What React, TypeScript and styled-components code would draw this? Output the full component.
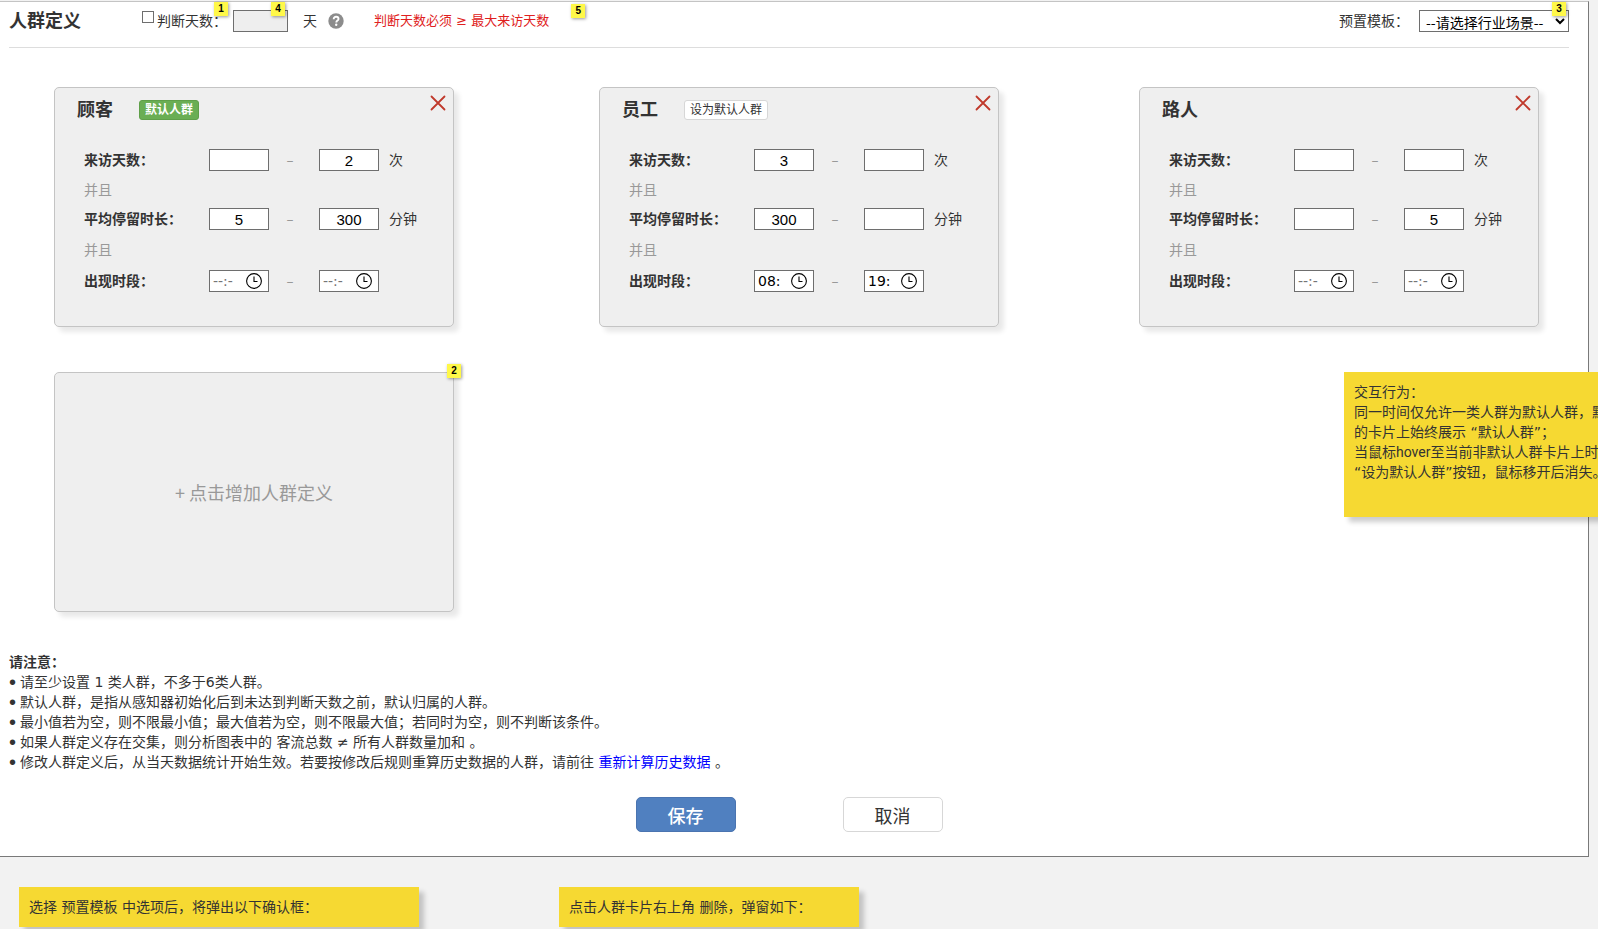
import React from "react";
import styled, { createGlobalStyle, css } from "styled-components";

const GlobalStyle = createGlobalStyle`
  *, *::before, *::after { box-sizing: border-box; }
  body {
    margin: 0;
    background: #f2f2f2;
    color: #333;
    font: 14px/20px "DejaVu Sans", "Noto Sans CJK SC", sans-serif;
  }
  button, input, select { font-family: inherit; color: inherit; margin: 0; }
`;

const Page = styled.div`
  position: relative;
  overflow: hidden;
  min-height: 100vh;
  padding-top: 1px;
`;

const Panel = styled.main`
  position: relative;
  margin-right: 9px;
  padding: 0 19px 24px 9px;
  background: #fff;
  border: solid #797979;
  border-width: 1px 1px 1px 0;
  border-top-color: #c4c4c4;
`;

const Header = styled.header`
  display: flex;
  align-items: center;
  height: 46px;
  padding-bottom: 8px;
  border-bottom: 1px solid #ddd;
`;

const PageTitle = styled.h1`
  margin: 0 61px 0 0;
  font-size: 18px;
  line-height: 20px;
`;

const CheckLabel = styled.label`
  display: flex;
  align-items: flex-start;
  gap: 3px;
  margin-right: 6px;
`;

const Checkbox = styled.input`
  appearance: none;
  width: 12px;
  height: 12px;
  border: 1px solid #6e6e6e;
  background: #fff;
  &:checked { background: #5080c0; }
`;

const Anchor = styled.div`
  position: relative;
  display: flex;
`;

const Marker = styled.span<{ $top: number; $right: number }>`
  position: absolute;
  top: ${(p) => p.$top}px;
  right: ${(p) => p.$right}px;
  width: 14px;
  height: 14px;
  background: #fff849;
  color: #000;
  font: bold 10px/14px "Liberation Sans", sans-serif;
  text-align: center;
  box-shadow: 1px 1px 3px rgba(0, 0, 0, 0.4);
`;

const fieldStyle = css`
  height: 22px;
  border: 1px solid #6e6e6e;
  border-radius: 0;
  background: #fff;
  color: #000;
`;

const DaysInput = styled.input`
  ${fieldStyle}
  width: 55px;
  background: #eee;
`;

const Unit = styled.span`
  margin: 0 11px 0 15px;
`;

const HelpButton = styled.button`
  display: flex;
  padding: 0;
  border: 0;
  background: none;
`;

const ErrorText = styled.span`
  margin: 0 36px 0 30px;
  color: #e02020;
  font-size: 13px;
`;

const TemplateLabel = styled.label`
  margin: 0 10px 0 auto;
`;

const TemplateSelect = styled.select`
  ${fieldStyle}
  width: 150px;
  padding: 0 0 0 2px;
  font: 14px "Noto Sans CJK SC", sans-serif;
`;

const CardGrid = styled.section`
  display: grid;
  grid-template-columns: minmax(400px, 545fr) minmax(400px, 540fr) 400px;
  row-gap: 45px;
  padding: 39px 30px 40px 45px;
`;

const cardStyle = css`
  position: relative;
  width: 400px;
  height: 240px;
  border: 1px solid #c4c4c4;
  border-radius: 5px;
  background: #efefef;
  box-shadow: 5px 5px 5px rgba(0, 0, 0, 0.09);
`;

const CardBox = styled.article`
  ${cardStyle}
  padding: 12px 8px 0 22px;
`;

const CardHead = styled.div`
  display: flex;
  align-items: center;
  height: 20px;
`;

const CardTitle = styled.h2`
  margin: 0 26px 0 0;
  font-size: 18px;
  line-height: 20px;
`;

const DefaultButton = styled.button<{ $active: boolean }>`
  height: 20px;
  padding: 0 5px;
  border: 1px solid ${(p) => (p.$active ? "#5f9f49" : "#d7d7d7")};
  border-radius: 3px;
  background: ${(p) => (p.$active ? "#6aae54" : "#fff")};
  color: ${(p) => (p.$active ? "#fff" : "#333")};
  font-size: 12px;
  line-height: 18px;
  font-weight: ${(p) => (p.$active ? 700 : 400)};
`;

const CloseButton = styled.button`
  position: absolute;
  top: 7px;
  right: 7px;
  display: flex;
  padding: 0;
  border: 0;
  background: none;
`;

const Rules = styled.div`
  display: grid;
  grid-template-rows: 22px 37px 22px 40px 22px;
  align-items: center;
  margin-top: 29px;
  padding-left: 7px;
`;

const RuleRow = styled.div`
  display: grid;
  grid-template-columns: 125px 60px 50px 60px 1fr;
  align-items: center;
`;

const RuleLabel = styled.label`
  font-weight: 700;
`;

const And = styled.span`
  color: #999;
`;

const Dash = styled.span`
  padding-right: 8px;
  color: #999;
  text-align: center;
`;

const NumberInput = styled.input`
  ${fieldStyle}
  width: 60px;
  padding: 0;
  font: 15px/20px "Liberation Sans", sans-serif;
  text-align: center;
`;

const TimeBox = styled.div`
  ${fieldStyle}
  display: flex;
  align-items: center;
  justify-content: space-between;
  width: 60px;
  padding: 0 6px 0 3px;
`;

const TimeInput = styled.input`
  width: 26px;
  height: 20px;
  padding: 0;
  border: 0;
  background: none;
  color: #000;
  font-size: 14px;
  &::placeholder { color: #757575; opacity: 1; }
`;

const RuleUnit = styled.span`
  padding-left: 10px;
`;

const AddBox = styled.div`
  position: relative;
  width: 400px;
`;

const AddCard = styled.button`
  ${cardStyle}
  color: #999;
  font: 18px "Noto Sans CJK SC", sans-serif;
`;

const NoticeTitle = styled.h3`
  margin: 0;
  font-size: 14px;
  line-height: 20px;
`;

const NoticeList = styled.ul`
  margin: 0;
  padding: 0;
  list-style: none;
`;

const Bullet = styled.span`
  display: inline-block;
  width: 11px;
  height: 20px;
  font: 20px/20px "Liberation Sans", sans-serif;
  vertical-align: top;
`;

const Link = styled.a`
  color: #0000ff;
  text-decoration: none;
`;

const Actions = styled.div`
  display: flex;
  justify-content: center;
  gap: 107px;
  margin-top: 25px;
`;

const ActionButton = styled.button<{ $primary?: boolean }>`
  width: 100px;
  height: 35px;
  padding: 0;
  border: 1px solid ${(p) => (p.$primary ? "#4a74b0" : "#d7d7d7")};
  border-radius: 5px;
  background: ${(p) => (p.$primary ? "#5080c0" : "#fff")};
  color: ${(p) => (p.$primary ? "#fff" : "#333")};
  font-size: 18px;
  font-weight: ${(p) => (p.$primary ? 500 : 400)};
`;

const stickyStyle = css`
  padding: 10px;
  background: #f6d932;
  box-shadow: 5px 5px 5px rgba(0, 0, 0, 0.2);
  white-space: nowrap;
`;

const SideNote = styled.aside`
  ${stickyStyle}
  position: absolute;
  top: 370px;
  right: -56px;
  width: 300px;
  height: 145px;
`;

const Latin = styled.span`
  font-family: Roboto, sans-serif;
`;

const NoteRow = styled.div`
  display: flex;
  gap: 140px;
  padding: 30px 19px 2px;
`;

const Note = styled.aside<{ $width: number }>`
  ${stickyStyle}
  width: ${(p) => p.$width}px;
`;

const CloseIcon = () => (
  <svg width="16" height="16" viewBox="0 0 16 16" aria-hidden="true">
    <path d="M1.5 1.5 14.5 14.5M14.5 1.5 1.5 14.5" stroke="#c0392b" strokeWidth="1.8" strokeLinecap="round" />
  </svg>
);

const HelpIcon = () => (
  <svg width="16" height="16" viewBox="0 0 16 16" aria-hidden="true">
    <circle cx="8" cy="8" r="7.7" fill="#8c8c8c" />
    <path d="M5.7 6.2C5.7 4.6 6.7 3.8 8.1 3.8s2.4.8 2.4 2.1c0 1.6-2.2 1.7-2.2 3.5" fill="none" stroke="#fff" strokeWidth="1.9" />
    <circle cx="8.2" cy="11.8" r="1.2" fill="#fff" />
  </svg>
);

const ClockIcon = () => (
  <svg width="16" height="16" viewBox="0 0 16 16" aria-hidden="true">
    <circle cx="8" cy="8" r="7.4" fill="none" stroke="#000" strokeWidth="1.1" />
    <path d="M8 3.5V8.5H11.5" fill="none" stroke="#000" strokeWidth="1.1" />
  </svg>
);

type Range = [string, string];

interface Crowd {
  id: string;
  name: string;
  mode?: "default" | "option";
  visits: Range;
  stay: Range;
  period: Range;
}

const crowds: Crowd[] = [
  { id: "customer", name: "顾客", mode: "default", visits: ["", "2"], stay: ["5", "300"], period: ["", ""] },
  { id: "staff", name: "员工", mode: "option", visits: ["3", ""], stay: ["300", ""], period: ["08:", "19:"] },
  { id: "passer", name: "路人", visits: ["", ""], stay: ["", "5"], period: ["", ""] },
];

interface RuleProps {
  id: string;
  label: string;
  unit?: string;
  values: Range;
  time?: boolean;
}

function Rule({ id, label, unit, values, time }: RuleProps) {
  const field = (i: 0 | 1) =>
    time ? (
      <TimeBox>
        <TimeInput type="text" id={`${id}-${i}`} aria-label={label} placeholder="--:-" defaultValue={values[i]} />
        <ClockIcon />
      </TimeBox>
    ) : (
      <NumberInput type="text" id={`${id}-${i}`} aria-label={label} defaultValue={values[i]} />
    );
  return (
    <RuleRow>
      <RuleLabel htmlFor={`${id}-0`}>{label}</RuleLabel>
      {field(0)}
      <Dash>–</Dash>
      {field(1)}
      {unit && <RuleUnit>{unit}</RuleUnit>}
    </RuleRow>
  );
}

function CrowdCard({ crowd }: { crowd: Crowd }) {
  return (
    <CardBox>
      <CardHead>
        <CardTitle>{crowd.name}</CardTitle>
        {crowd.mode && (
          <DefaultButton type="button" $active={crowd.mode === "default"}>
            {crowd.mode === "default" ? "默认人群" : "设为默认人群"}
          </DefaultButton>
        )}
      </CardHead>
      <CloseButton type="button" aria-label="删除">
        <CloseIcon />
      </CloseButton>
      <Rules>
        <Rule id={`${crowd.id}-visits`} label="来访天数：" unit="次" values={crowd.visits} />
        <And>并且</And>
        <Rule id={`${crowd.id}-stay`} label="平均停留时长：" unit="分钟" values={crowd.stay} />
        <And>并且</And>
        <Rule id={`${crowd.id}-period`} label="出现时段：" values={crowd.period} time />
      </Rules>
    </CardBox>
  );
}

export default function App() {
  return (
    <Page lang="zh-CN">
      <GlobalStyle />
      <Panel>
        <Header>
          <PageTitle>人群定义</PageTitle>
          <Anchor>
            <CheckLabel>
              <Checkbox type="checkbox" />
              判断天数：
            </CheckLabel>
            <Marker $top={-9} $right={5}>1</Marker>
          </Anchor>
          <Anchor>
            <DaysInput type="text" aria-label="判断天数" />
            <Marker $top={-8} $right={3}>4</Marker>
          </Anchor>
          <Unit>天</Unit>
          <HelpButton type="button" aria-label="帮助">
            <HelpIcon />
          </HelpButton>
          <Anchor>
            <ErrorText>判断天数必须 ≥ 最大来访天数</ErrorText>
            <Marker $top={-7} $right={0}>5</Marker>
          </Anchor>
          <TemplateLabel htmlFor="template">预置模板：</TemplateLabel>
          <Anchor>
            <TemplateSelect id="template">
              <option>--请选择行业场景--</option>
            </TemplateSelect>
            <Marker $top={-8} $right={3}>3</Marker>
          </Anchor>
        </Header>

        <CardGrid>
          {crowds.map((crowd) => (
            <CrowdCard key={crowd.id} crowd={crowd} />
          ))}
          <AddBox>
            <AddCard type="button">+ 点击增加人群定义</AddCard>
            <Marker $top={-8} $right={-7}>2</Marker>
          </AddBox>
        </CardGrid>

        <section>
          <NoticeTitle>请注意：</NoticeTitle>
          <NoticeList>
            <li><Bullet>•</Bullet>请至少设置 1 类人群，不多于6类人群。</li>
            <li><Bullet>•</Bullet>默认人群，是指从感知器初始化后到未达到判断天数之前，默认归属的人群。</li>
            <li><Bullet>•</Bullet>最小值若为空，则不限最小值；最大值若为空，则不限最大值；若同时为空，则不判断该条件。</li>
            <li><Bullet>•</Bullet>如果人群定义存在交集，则分析图表中的 客流总数 ≠ 所有人群数量加和 。</li>
            <li>
              <Bullet>•</Bullet>修改人群定义后，从当天数据统计开始生效。若要按修改后规则重算历史数据的人群，请前往 <Link href="#recalculate">重新计算历史数据</Link> 。
            </li>
          </NoticeList>
        </section>

        <Actions>
          <ActionButton type="button" $primary>保存</ActionButton>
          <ActionButton type="button">取消</ActionButton>
        </Actions>

        <SideNote>
          交互行为：<br />
          同一时间仅允许一类人群为默认人群，默<br />
          的卡片上始终展示 “默认人群”；<br />
          当鼠标<Latin>hover</Latin>至当前非默认人群卡片上时<br />
          “设为默认人群”按钮，鼠标移开后消失。
        </SideNote>
      </Panel>

      <NoteRow>
        <Note $width={400}>选择 预置模板 中选项后，将弹出以下确认框：</Note>
        <Note $width={300}>点击人群卡片右上角 删除，弹窗如下：</Note>
      </NoteRow>
    </Page>
  );
}
